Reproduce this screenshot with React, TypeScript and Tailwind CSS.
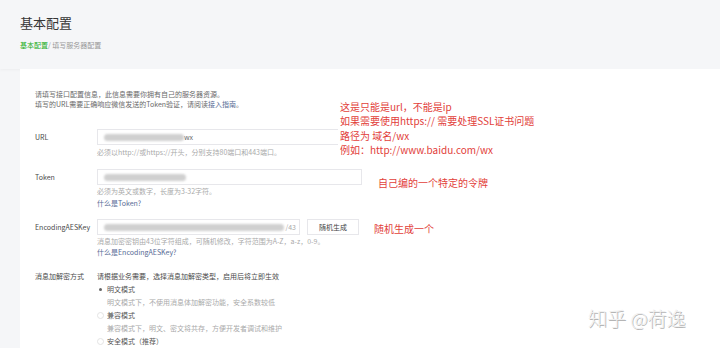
const font = { fontFamily: '"Noto Sans CJK SC", "Noto Sans", sans-serif' };

const Blur = ({ w }: { w: number }) => (
  <span className="inline-block h-[7px] bg-[#d0d0d0] blur-[1px] rounded-sm" style={{ width: w }} />
);

const Radio = ({ checked, label }: { checked?: boolean; label: string }) => (
  <div className="flex items-center h-[13px] leading-[13px]">
    <span className="w-[7px] flex justify-center mr-[3px]">
      {checked ? (
        <span className="w-[3px] h-[3px] rounded-full bg-[#666]" />
      ) : (
        <span className="w-[7px] h-[7px] rounded-full border border-[#e4e4e4]" />
      )}
    </span>
    <span className="text-[#555]">{label}</span>
  </div>
);

const Hint = ({ children }: { children: React.ReactNode }) => (
  <div className="h-[13px] leading-[13px] pl-[10px] text-[#aaa]">{children}</div>
);

export default function App() {
  return (
    <div className="relative w-[720px] h-[348px] overflow-hidden bg-[#f5f6f8] text-[7px]" style={font}>
      {/* header */}
      <div className="h-[69px] pl-[20px] pt-[14px] shadow-[0_1px_3px_rgba(0,0,0,0.04)]">
        <h1 className="text-[13px] leading-[18px] text-[#353535]">基本配置</h1>
        <div className="mt-[8px] leading-[10px]">
          <span className="text-[#1aad19]">基本配置</span>
          <span className="text-[#999]">/ 填写服务器配置</span>
        </div>
      </div>

      {/* card */}
      <div className="ml-[20px] h-[279px] bg-white pl-[15px] pt-[20px] text-[#4a4a4a]">
        <div className="leading-[10px] text-[#6a6a6a]">
          <p>请填写接口配置信息，此信息需要你拥有自己的服务器资源。</p>
          <p>
            填写的URL需要正确响应微信发送的Token验证，请阅读<span className="text-[#576b95]">接入指南</span>。
          </p>
        </div>

        {/* URL */}
        <div className="mt-[20px] flex">
          <div className="w-[62px] shrink-0 h-[16px] flex items-center">URL</div>
          <div>
            <div className="w-[265px] h-[16px] border border-[#e7e7eb] flex items-center pl-[6px]">
              <Blur w={80} />
              <span className="text-[#666]">wx</span>
            </div>
            <div className="mt-[2px] leading-[10px] text-[#aaa]">必须以http://或https://开头，分别支持80端口和443端口。</div>
          </div>
        </div>

        {/* Token */}
        <div className="mt-[12px] flex">
          <div className="w-[62px] shrink-0 h-[16px] flex items-center">Token</div>
          <div>
            <div className="w-[265px] h-[16px] border border-[#e7e7eb] flex items-center pl-[6px]">
              <Blur w={82} />
            </div>
            <div className="leading-[12px] text-[#aaa]">必须为英文或数字，长度为3-32字符。</div>
            <div className="leading-[12px] text-[#576b95]">什么是Token?</div>
          </div>
        </div>

        {/* EncodingAESKey */}
        <div className="mt-[10px] flex">
          <div className="w-[62px] shrink-0 h-[16px] flex items-center">EncodingAESKey</div>
          <div>
            <div className="flex gap-[7px]">
              <div className="w-[203px] h-[16px] border border-[#e7e7eb] flex items-center pl-[6px] pr-[3px]">
                <Blur w={180} />
                <span className="ml-auto text-[#aaa]">/43</span>
              </div>
              <button className="w-[52px] h-[16px] border border-[#e7e7eb] bg-white text-[#444]">随机生成</button>
            </div>
            <div className="mt-[1px] leading-[11px] text-[#aaa]">消息加密密钥由43位字符组成，可随机修改，字符范围为A-Z，a-z，0-9。</div>
            <div className="leading-[11px] text-[#576b95]">什么是EncodingAESKey?</div>
          </div>
        </div>

        {/* 加解密方式 */}
        <div className="mt-[12px] flex">
          <div className="w-[62px] shrink-0 leading-[13px]">消息加解密方式</div>
          <div>
            <div className="leading-[13px]">请根据业务需要，选择消息加解密类型，启用后将立即生效</div>
            <Radio checked label="明文模式" />
            <Hint>明文模式下，不使用消息体加解密功能，安全系数较低</Hint>
            <Radio label="兼容模式" />
            <Hint>兼容模式下，明文、密文将共存，方便开发者调试和维护</Hint>
            <Radio label="安全模式（推荐）" />
          </div>
        </div>
      </div>

      {/* annotations */}
      <div className="absolute left-[338px] top-[100px] bg-white px-[2px] text-[10px] leading-[14.3px] text-[#e2403a]">
        <p>这是只能是url，不能是ip</p>
        <p>如果需要使用https:// 需要处理SSL证书问题</p>
        <p>路径为 域名/wx</p>
        <p>例如：http://www.baidu.com/wx</p>
      </div>
      <div className="absolute left-[378px] top-[176px] text-[10px] leading-[14px] text-[#e2403a]">自己编的一个特定的令牌</div>
      <div className="absolute left-[374px] top-[222px] text-[10px] leading-[14px] text-[#e2403a]">随机生成一个</div>

      {/* watermark */}
      <div className="absolute left-[588px] top-[306px] text-[19px] leading-[24px] font-light text-[#f0f0f0] [text-shadow:1px_1px_0_#b5b5b5]">
        知乎 @荷逸
      </div>
    </div>
  );
}
